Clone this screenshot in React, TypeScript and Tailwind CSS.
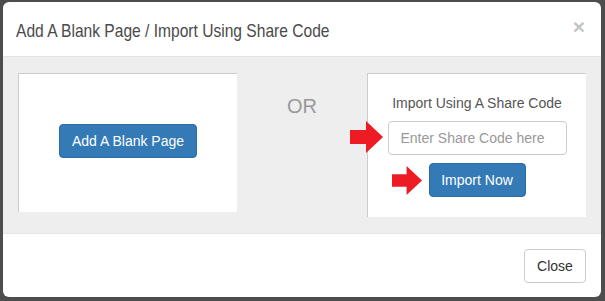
function FlechaRoja({ className }: { className: string }) {
  return (
    <svg className={className} viewBox="0 0 33 32" width="33" height="32">
      <path d="M0 9 H16 V0 L33 16 L16 32 V23 H0 Z" fill="#ed1c24" />
    </svg>
  );
}

export default function App() {
  return (
    <div
      className="w-[605px] h-[301px] bg-[#4d4d4d] pt-[2px] pl-[3px] overflow-hidden"
      style={{ fontFamily: '"Liberation Sans", Arial, sans-serif' }}
    >
      <div className="w-[598px] h-[295px] bg-white rounded-[6px] overflow-hidden flex flex-col">
        {/* cabecera */}
        <div className="h-[55px] shrink-0 border-b border-[#e5e5e5] pl-[13px] pr-[16px] flex items-center justify-between">
          <h4 className="text-[19px] leading-[20px] text-[#4a4a4a] pt-[3px] whitespace-nowrap scale-x-[0.82] origin-left">
            Add A Blank Page / Import Using Share Code
          </h4>
          <span className="text-[21px] font-bold text-[#c4c4c4] leading-none -mt-[5px]">×</span>
        </div>

        {/* cuerpo */}
        <div className="h-[176px] shrink-0 bg-[#eeeeee] px-[15px] pt-[16px] flex items-start">
          <div className="w-[219px] h-[139px] bg-white border-t border-l border-[#cccccc] flex items-center justify-center pb-[4px]">
            <button className="h-[34px] px-[12px] rounded-[4px] bg-[#337ab7] border border-[#2e6da4] text-white text-[14px] leading-[20px]">
              Add A Blank Page
            </button>
          </div>

          <div className="w-[130px] flex justify-center pt-[20px]">
            <span className="text-[20px] leading-[26px] text-[#999999]">OR</span>
          </div>

          <div className="relative w-[219px] h-[144px] bg-white border-t border-l border-[#cccccc] flex flex-col items-center pt-[19px]">
            <p className="text-[14px] leading-[20px] text-[#555555]">Import Using A Share Code</p>
            <input
              className="mt-[8px] w-[179px] h-[34px] rounded-[4px] border border-[#cccccc] px-[12px] text-[14px] text-[#555] placeholder:text-[#999999] outline-none"
              placeholder="Enter Share Code here"
            />
            <button className="mt-[8px] h-[34px] w-[97px] rounded-[4px] bg-[#337ab7] border border-[#2e6da4] text-white text-[14px] leading-[20px]">
              Import Now
            </button>
            <FlechaRoja className="absolute left-[-18px] top-[47px]" />
            <FlechaRoja className="absolute left-[24px] top-[91px] w-[30px] h-[31px]" />
          </div>
        </div>

        {/* pie */}
        <div className="flex-1 border-t border-[#e5e5e5] flex items-center justify-end pr-[15px] pt-[1px]">
          <button className="h-[34px] w-[62px] rounded-[4px] bg-white border border-[#cccccc] text-[#333] text-[14px] leading-[20px]">
            Close
          </button>
        </div>
      </div>
    </div>
  );
}
